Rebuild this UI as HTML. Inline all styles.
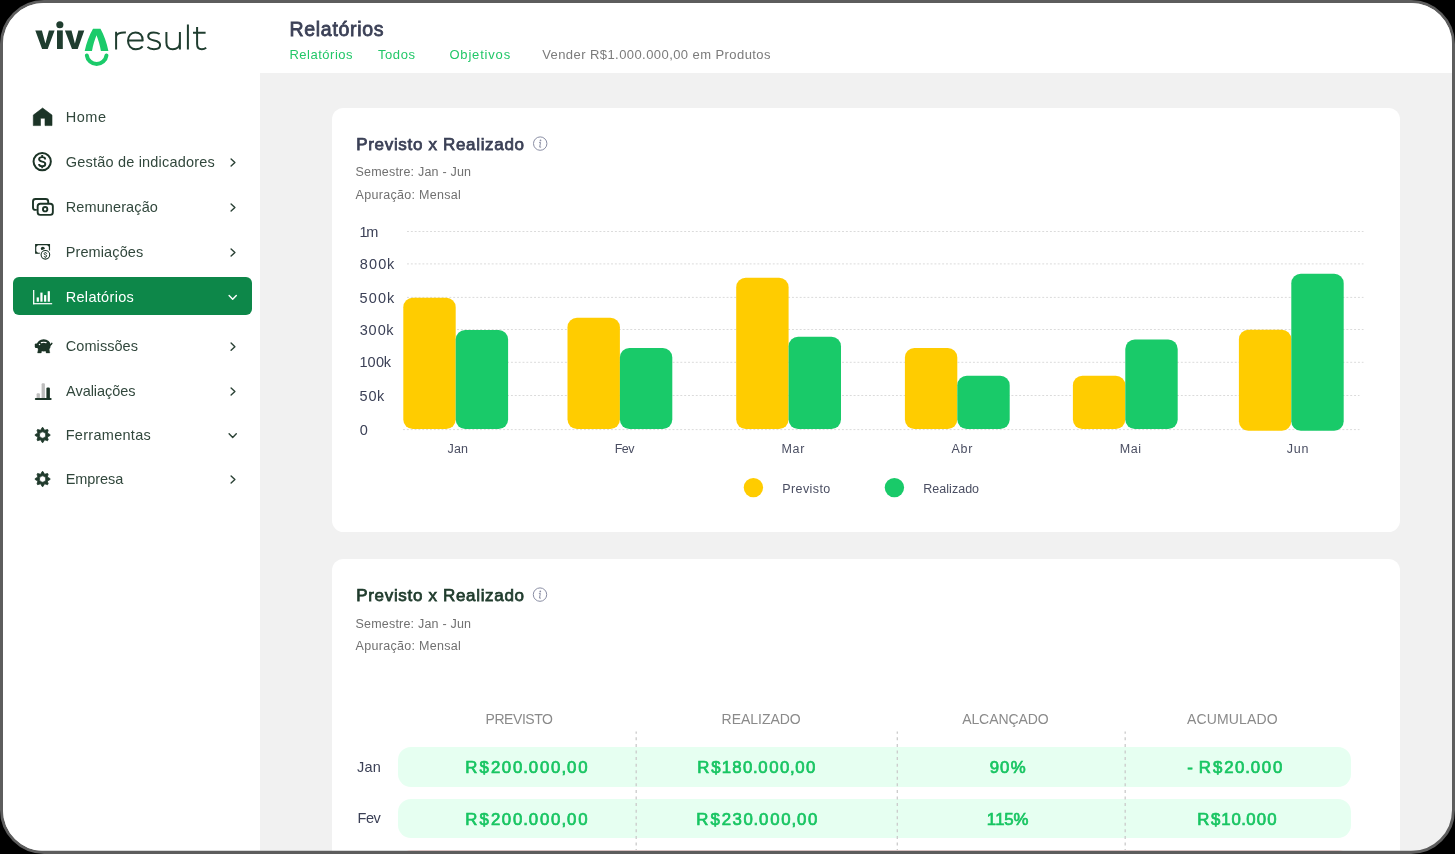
<!DOCTYPE html>
<html lang="pt-br">
<head>
<meta charset="utf-8">
<title>Relatórios</title>
<style>
html,body{margin:0;padding:0;width:1455px;height:854px;background:#000;overflow:hidden}
body{font-family:"Liberation Sans",sans-serif;position:relative}
#frame{position:absolute;left:0;top:0;width:1455px;height:854px;box-sizing:border-box;border:3px solid #5d5d5d;border-radius:44px;overflow:hidden;background:#f1f1f1}
#page{position:absolute;left:-3px;top:-3px;width:1455px;height:854px}
.abs{position:absolute}
#sidebar{left:0;top:0;width:260px;height:854px;background:#fff}
#header{left:260px;top:0;width:1195px;height:73px;background:#fff}
.card{left:332px;width:1068px;background:#fff;border-radius:11.5px}
#card1{top:108px;height:424px}
#card2{top:559px;height:340px}
#active{left:13px;top:277px;width:239px;height:38px;border-radius:6px;background:#0d8749}
.pill{left:398.4px;width:952.6px;height:39.4px;border-radius:13px;background:#e6fff1}
.t{position:absolute;white-space:nowrap;font-family:"Liberation Sans",sans-serif}
#txt{position:absolute;left:0;top:0;width:1455px;height:854px;will-change:transform}
svg{position:absolute;left:0;top:0;overflow:visible}
</style>
</head>
<body>
<div id="frame"><div id="page">
<div id="sidebar" class="abs"></div>
<div id="header" class="abs"></div>
<div id="card1" class="abs card"></div>
<div id="card2" class="abs card"></div>
<div id="active" class="abs"></div>
<div class="abs pill" style="top:747.1px;height:39.7px"></div>
<div class="abs pill" style="top:798.7px;height:38.9px"></div>

<svg width="1455" height="854" viewBox="0 0 1455 854">
<path d="M35.3 30.4 H41.9 L45.4 43.6 L48.9 30.4 H54.6 L47.7 49 H42.1 Z" fill="#1f3d2f"/>
<rect x="57" y="30.4" width="5.8" height="18.6" fill="#1f3d2f"/>
<circle cx="59.85" cy="24.7" r="3.55" fill="#1f3d2f"/>
<path d="M64.9 30.4 H71.5 L74.9 43.6 L78.4 30.4 H84.3 L77.7 49 H72 Z" fill="#1f3d2f"/>
<path d="M93 28.8 H100.5 C104 35 106.8 43 108.4 50.9 H100.9 C99.9 45.5 98.4 40 96.5 35.3 C94.6 40 93 45.5 92 50.9 H84.7 C86.4 43 89.3 35 93 28.8 Z" fill="#1bcb6a"/>
<path d="M86.84 55.4 A9.9 9.9 0 0 0 106.46 55.4" fill="none" stroke="#1bcb6a" stroke-width="4" stroke-linecap="round"/>
<path d="M116.1 49.6 V31.8 M116.1 36.8 C116.3 33.8 120 32.2 125.9 32.6 M128 40.4 H142.7 C142.7 35.4 139.8 32.4 135.4 32.4 C130.9 32.4 128 36 128 40.8 C128 45.6 131 49.2 135.8 49.2 C138.6 49.2 140.9 48.2 142.6 46.3 M159.6 34 C157.6 32.8 155.6 32.4 153.6 32.4 C150.5 32.4 148.2 33.8 148.2 36.3 C148.2 39 150.6 39.8 154.1 40.5 C157.6 41.2 160.1 42.1 160.1 45 C160.1 47.8 157.5 49.2 154 49.2 C151.5 49.2 149 48.4 147.5 46.9 M166.4 31.9 V42.4 C166.4 46.8 168.8 49.2 172.8 49.2 C176.6 49.2 179.9 46.8 179.9 42 M179.9 31.9 V49.4 M187.9 24.4 V49.6 M197.1 26.9 V44 C197.1 47.5 199 49.2 201.8 49.2 C203.5 49.2 205 48.7 206.2 47.8 M193 32.7 H205.6" fill="none" stroke="#1f3d2f" stroke-width="2" stroke-linecap="butt" stroke-linejoin="round"/>
<path d="M42.6 108 L52 115.1 V125.6 H45 V118.7 Q45 118.2 44.5 118.2 H41 Q40.5 118.2 40.5 118.7 V125.6 H33.3 V115.1 Z" fill="#1c3427" stroke="#1c3427" stroke-width="0.6" stroke-linejoin="round"/>
<circle cx="42.2" cy="161.6" r="8.65" fill="none" stroke="#1c3427" stroke-width="2"/>
<path d="M45.2 159.4 C45.2 157.9 44 157.1 42.2 157.1 C40.3 157.1 39.1 158 39.1 159.3 C39.1 160.7 40.3 161.2 42.2 161.6 C44.1 162 45.3 162.5 45.3 163.9 C45.3 165.3 44 166.2 42.2 166.2 C40.3 166.2 39.1 165.3 39.1 163.9 M42.2 155.1 V157.1 M42.2 166.2 V168.3" fill="none" stroke="#1c3427" stroke-width="1.9" stroke-linecap="butt"/>
<path d="M48.2 203 V201.5 Q48.2 199 45.7 199 H35.5 Q33 199 33 201.5 V207.4 Q33 209.9 35.5 209.9 H36.8" fill="none" stroke="#1c3427" stroke-width="1.9"/>
<rect x="37.65" y="203.75" width="15.2" height="11.1" rx="2.6" fill="none" stroke="#1c3427" stroke-width="1.9"/>
<circle cx="45.15" cy="209.15" r="2.2" fill="none" stroke="#1c3427" stroke-width="1.9"/>
<path d="M40.4 253.25 H35.7 V244.7 H49.45 V250.8" fill="none" stroke="#1c3427" stroke-width="1.2"/>
<path d="M35.7 244.7 H38.3 L35.7 247.3 Z M49.45 244.7 H46.85 L49.45 247.3 Z M35.7 253.25 V250.65 L38.3 253.25 Z" fill="#1c3427"/>
<circle cx="42.8" cy="248.6" r="1.95" fill="#1c3427"/>
<circle cx="45.4" cy="254.85" r="5.9" fill="#fff"/>
<circle cx="45.4" cy="254.85" r="4.3" fill="#fff" stroke="#1c3427" stroke-width="1.1"/>
<path d="M46.75 253.8 C46.75 253 46.2 252.7 45.4 252.7 C44.6 252.7 44.05 253.1 44.05 253.75 C44.05 254.45 44.6 254.65 45.4 254.85 C46.2 255.05 46.75 255.25 46.75 255.95 C46.75 256.65 46.2 257 45.4 257 C44.6 257 44.05 256.6 44.05 255.95 M45.4 252 V252.7 M45.4 257 V257.7" fill="none" stroke="#1c3427" stroke-width="0.9"/>
<rect x="33.05" y="290" width="1.25" height="14.3" fill="#fff"/><rect x="33.05" y="303.1" width="19.1" height="1.2" fill="#fff"/>
<rect x="36.7" y="297.4" width="2.2" height="4.30" fill="#fff"/>
<rect x="40.35" y="292.6" width="2.2" height="9.10" fill="#fff"/>
<rect x="44.05" y="295.1" width="2.2" height="6.60" fill="#fff"/>
<rect x="47.7" y="291.2" width="2.2" height="10.50" fill="#fff"/>
<ellipse cx="43.7" cy="345.4" rx="7" ry="6.2" fill="#1c3427"/>
<rect x="34.8" y="343.4" width="5" height="4.6" rx="1.2" fill="#1c3427"/>
<path d="M38.4 348.5 H42.2 L41.2 352.9 H37.6 Z M45.2 348.5 H49 L49.8 352.9 H46.2 Z" fill="#1c3427" stroke="#1c3427" stroke-width="0.4" stroke-linejoin="round"/>
<path d="M50 345 C51 344.8 51.6 344.2 51.9 343.3" fill="none" stroke="#1c3427" stroke-width="1.4" stroke-linecap="round"/>
<path d="M41.3 342.6 Q43.7 341.9 46.1 342.6" fill="none" stroke="#fff" stroke-width="1.1" stroke-linecap="round"/>
<circle cx="39.5" cy="344.5" r="0.75" fill="#fff"/>
<rect x="36.6" y="393.2" width="3.3" height="6" rx="1" fill="#bdbdbd"/>
<rect x="41.6" y="383.2" width="3.3" height="16" rx="1" fill="#bdbdbd"/>
<rect x="46.4" y="387.4" width="3.5" height="12" rx="1.2" fill="#1c3427"/>
<rect x="34.8" y="397.9" width="16.9" height="2.2" rx="1.1" fill="#1c3427"/>
<path d="M42.19 427.56 L43.01 427.56 L44.57 430.29 L47.60 429.46 L48.19 430.05 L47.36 433.08 L50.09 434.64 L50.09 435.46 L47.36 437.02 L48.19 440.05 L47.60 440.64 L44.57 439.81 L43.01 442.54 L42.19 442.54 L40.63 439.81 L37.60 440.64 L37.01 440.05 L37.84 437.02 L35.11 435.46 L35.11 434.64 L37.84 433.08 L37.01 430.05 L37.60 429.46 L40.63 430.29 Z M39.40 435.05 a3.2 3.2 0 1 0 6.4 0 a3.2 3.2 0 1 0 -6.4 0 Z" fill="#203a2c" stroke="#203a2c" stroke-width="0.8" stroke-linejoin="round" fill-rule="evenodd"/>
<path d="M42.19 471.56 L43.01 471.56 L44.57 474.29 L47.60 473.46 L48.19 474.05 L47.36 477.08 L50.09 478.64 L50.09 479.46 L47.36 481.02 L48.19 484.05 L47.60 484.64 L44.57 483.81 L43.01 486.54 L42.19 486.54 L40.63 483.81 L37.60 484.64 L37.01 484.05 L37.84 481.02 L35.11 479.46 L35.11 478.64 L37.84 477.08 L37.01 474.05 L37.60 473.46 L40.63 474.29 Z M39.40 479.05 a3.2 3.2 0 1 0 6.4 0 a3.2 3.2 0 1 0 -6.4 0 Z" fill="#203a2c" stroke="#203a2c" stroke-width="0.8" stroke-linejoin="round" fill-rule="evenodd"/>
<path d="M231.1 158.90 L234.9 162.50 L231.1 166.10" fill="none" stroke="#2b4236" stroke-width="1.4" stroke-linecap="round" stroke-linejoin="round"/>
<path d="M231.1 203.90 L234.9 207.50 L231.1 211.10" fill="none" stroke="#2b4236" stroke-width="1.4" stroke-linecap="round" stroke-linejoin="round"/>
<path d="M231.1 248.90 L234.9 252.50 L231.1 256.10" fill="none" stroke="#2b4236" stroke-width="1.4" stroke-linecap="round" stroke-linejoin="round"/>
<path d="M231.1 343.10 L234.9 346.70 L231.1 350.30" fill="none" stroke="#2b4236" stroke-width="1.4" stroke-linecap="round" stroke-linejoin="round"/>
<path d="M231.1 387.90 L234.9 391.50 L231.1 395.10" fill="none" stroke="#2b4236" stroke-width="1.4" stroke-linecap="round" stroke-linejoin="round"/>
<path d="M231.1 475.90 L234.9 479.50 L231.1 483.10" fill="none" stroke="#2b4236" stroke-width="1.4" stroke-linecap="round" stroke-linejoin="round"/>
<path d="M229.1 295.40 L232.7 299.20 L236.3 295.40" fill="none" stroke="#fff" stroke-width="1.4" stroke-linecap="round" stroke-linejoin="round"/>
<path d="M229.1 433.70 L232.7 437.50 L236.3 433.70" fill="none" stroke="#2b4236" stroke-width="1.4" stroke-linecap="round" stroke-linejoin="round"/>
<line x1="407" y1="231.5" x2="1363.5" y2="231.5" stroke="#dbdbdb" stroke-width="1" stroke-dasharray="1.95 1.9"/>
<line x1="407" y1="263.9" x2="1363.5" y2="263.9" stroke="#dbdbdb" stroke-width="1" stroke-dasharray="1.95 1.9"/>
<line x1="407" y1="297.4" x2="1363.5" y2="297.4" stroke="#dbdbdb" stroke-width="1" stroke-dasharray="1.95 1.9"/>
<line x1="407" y1="329.5" x2="1363.5" y2="329.5" stroke="#dbdbdb" stroke-width="1" stroke-dasharray="1.95 1.9"/>
<line x1="407" y1="362.3" x2="1363.5" y2="362.3" stroke="#dbdbdb" stroke-width="1" stroke-dasharray="1.95 1.9"/>
<line x1="407" y1="395.5" x2="1359.5" y2="395.5" stroke="#dbdbdb" stroke-width="1" stroke-dasharray="1.95 1.9"/>
<line x1="403" y1="429.6" x2="1359.5" y2="429.6" stroke="#dbdbdb" stroke-width="1" stroke-dasharray="1.95 1.9"/>
<rect x="403.3" y="297.8" width="52.4" height="131.20" rx="9.5" fill="#ffcc00"/>
<rect x="455.70" y="330" width="52.4" height="99.00" rx="9.5" fill="#19ca69"/>
<rect x="567.5" y="317.8" width="52.4" height="111.20" rx="9.5" fill="#ffcc00"/>
<rect x="619.90" y="348" width="52.4" height="81.00" rx="9.5" fill="#19ca69"/>
<rect x="736.2" y="277.8" width="52.4" height="151.20" rx="9.5" fill="#ffcc00"/>
<rect x="788.60" y="336.8" width="52.4" height="92.20" rx="9.5" fill="#19ca69"/>
<rect x="904.9" y="348" width="52.4" height="81.00" rx="9.5" fill="#ffcc00"/>
<rect x="957.30" y="375.8" width="52.4" height="53.20" rx="9.5" fill="#19ca69"/>
<rect x="1072.9" y="375.8" width="52.4" height="53.20" rx="9.5" fill="#ffcc00"/>
<rect x="1125.30" y="339.4" width="52.4" height="89.60" rx="9.5" fill="#19ca69"/>
<rect x="1238.9" y="329.8" width="52.4" height="101.00" rx="9.5" fill="#ffcc00"/>
<rect x="1291.30" y="273.8" width="52.4" height="157.00" rx="9.5" fill="#19ca69"/>
<circle cx="753.4" cy="487.6" r="9.7" fill="#ffcc00"/><circle cx="894.4" cy="487.6" r="9.7" fill="#19ca69"/>
<circle cx="540.2" cy="143.6" r="6.7" fill="none" stroke="#8a8ea4" stroke-width="1"/><circle cx="540.5" cy="140.4" r="0.85" fill="#8a8ea4"/><path d="M539.10 142.40 H540.50 L539.70 147.10 H541.10" fill="none" stroke="#8a8ea4" stroke-width="1"/>
<circle cx="540.0" cy="594.6" r="6.7" fill="none" stroke="#8a8ea4" stroke-width="1"/><circle cx="540.3" cy="591.4" r="0.85" fill="#8a8ea4"/><path d="M538.90 593.40 H540.30 L539.50 598.10 H540.90" fill="none" stroke="#8a8ea4" stroke-width="1"/>
<line x1="636.2" y1="731.5" x2="636.2" y2="854" stroke="#cbcbcb" stroke-width="1.3" stroke-dasharray="3 3.57" stroke-dashoffset="0.7"/>
<line x1="897.3" y1="731.5" x2="897.3" y2="854" stroke="#cbcbcb" stroke-width="1.3" stroke-dasharray="3 3.57" stroke-dashoffset="0.7"/>
<line x1="1125.2" y1="731.5" x2="1125.2" y2="854" stroke="#cbcbcb" stroke-width="1.3" stroke-dasharray="3 3.57" stroke-dashoffset="0.7"/>
<rect x="398.4" y="850.1" width="952.6" height="39" rx="13" fill="#ffe4e4"/>
<rect x="0" y="850.75" width="1455" height="3.25" fill="#5d5d5d"/>
</svg>

<div id="txt">
<span class="t" style="left:65.73px;top:110px;font-size:14.5px;line-height:14.5px;color:#31473c;letter-spacing:0.537px;">Home</span>
<span class="t" style="left:65.80px;top:155px;font-size:14.5px;line-height:14.5px;color:#31473c;letter-spacing:0.195px;">Gestão de indicadores</span>
<span class="t" style="left:65.73px;top:200px;font-size:14.5px;line-height:14.5px;color:#31473c;letter-spacing:0.109px;">Remuneração</span>
<span class="t" style="left:65.73px;top:245px;font-size:14.5px;line-height:14.5px;color:#31473c;letter-spacing:0.104px;">Premiações</span>
<span class="t" style="left:65.73px;top:290px;font-size:14.5px;line-height:14.5px;color:#ffffff;letter-spacing:0.310px;">Relatórios</span>
<span class="t" style="left:65.80px;top:339px;font-size:14.5px;line-height:14.5px;color:#31473c;letter-spacing:0.061px;">Comissões</span>
<span class="t" style="left:66.10px;top:384px;font-size:14.5px;line-height:14.5px;color:#31473c;letter-spacing:-0.042px;">Avaliações</span>
<span class="t" style="left:65.73px;top:428px;font-size:14.5px;line-height:14.5px;color:#31473c;letter-spacing:0.287px;">Ferramentas</span>
<span class="t" style="left:65.73px;top:472px;font-size:14.5px;line-height:14.5px;color:#31473c;letter-spacing:-0.087px;">Empresa</span>
<span class="t" style="left:289.51px;top:20px;font-size:19.5px;line-height:19.5px;color:#3b4056;-webkit-text-stroke:0.8px #3b4056;letter-spacing:0.697px;">Relatórios</span>
<span class="t" style="left:289.40px;top:48px;font-size:13px;line-height:13px;color:#22c768;letter-spacing:0.513px;">Relatórios</span>
<span class="t" style="left:378.00px;top:48px;font-size:13px;line-height:13px;color:#22c768;letter-spacing:0.562px;">Todos</span>
<span class="t" style="left:449.45px;top:48px;font-size:13px;line-height:13px;color:#22c768;letter-spacing:0.818px;">Objetivos</span>
<span class="t" style="left:542.15px;top:48px;font-size:13px;line-height:13px;color:#7b7b7b;letter-spacing:0.429px;">Vender R$1.000.000,00 em Produtos</span>
<span class="t" style="left:356.27px;top:136px;font-size:17px;line-height:17px;color:#3b4056;-webkit-text-stroke:0.75px #3b4056;letter-spacing:0.672px;">Previsto x Realizado</span>
<span class="t" style="left:355.49px;top:166px;font-size:12.5px;line-height:12.5px;color:#707070;letter-spacing:0.204px;">Semestre: Jan - Jun</span>
<span class="t" style="left:355.56px;top:189px;font-size:12.5px;line-height:12.5px;color:#707070;letter-spacing:0.296px;">Apuração: Mensal</span>
<span class="t" style="left:359.40px;top:225px;font-size:14.5px;line-height:14.5px;color:#3b4056;"><span style="letter-spacing:-1.27px">1</span><span style="letter-spacing:0.00px">m</span></span>
<span class="t" style="left:359.70px;top:257px;font-size:14.5px;line-height:14.5px;color:#3b4056;"><span style="letter-spacing:1.11px">8</span><span style="letter-spacing:1.18px">0</span><span style="letter-spacing:0.77px">0</span><span style="letter-spacing:0.00px">k</span></span>
<span class="t" style="left:359.58px;top:291px;font-size:14.5px;line-height:14.5px;color:#3b4056;"><span style="letter-spacing:1.15px">5</span><span style="letter-spacing:1.20px">0</span><span style="letter-spacing:0.79px">0</span><span style="letter-spacing:0.00px">k</span></span>
<span class="t" style="left:359.67px;top:323px;font-size:14.5px;line-height:14.5px;color:#3b4056;"><span style="letter-spacing:0.88px">3</span><span style="letter-spacing:0.95px">0</span><span style="letter-spacing:0.54px">0</span><span style="letter-spacing:0.00px">k</span></span>
<span class="t" style="left:359.40px;top:355px;font-size:14.5px;line-height:14.5px;color:#3b4056;"><span style="letter-spacing:0.12px">1</span><span style="letter-spacing:0.26px">0</span><span style="letter-spacing:-0.15px">0</span><span style="letter-spacing:0.00px">k</span></span>
<span class="t" style="left:359.58px;top:389px;font-size:14.5px;line-height:14.5px;color:#3b4056;"><span style="letter-spacing:0.79px">5</span><span style="letter-spacing:0.42px">0</span><span style="letter-spacing:0.00px">k</span></span>
<span class="t" style="left:359.78px;top:423px;font-size:14.5px;line-height:14.5px;color:#3b4056;"><span style="letter-spacing:0.00px">0</span></span>
<span class="t" style="left:447.56px;top:443px;font-size:12.5px;line-height:12.5px;color:#4a4e62;letter-spacing:0.151px;">Jan</span>
<span class="t" style="left:614.66px;top:443px;font-size:12.5px;line-height:12.5px;color:#4a4e62;letter-spacing:-0.453px;">Fev</span>
<span class="t" style="left:781.55px;top:443px;font-size:12.5px;line-height:12.5px;color:#4a4e62;letter-spacing:0.658px;">Mar</span>
<span class="t" style="left:951.47px;top:443px;font-size:12.5px;line-height:12.5px;color:#4a4e62;letter-spacing:0.734px;">Abr</span>
<span class="t" style="left:1119.66px;top:443px;font-size:12.5px;line-height:12.5px;color:#4a4e62;letter-spacing:0.587px;">Mai</span>
<span class="t" style="left:1286.81px;top:443px;font-size:12.5px;line-height:12.5px;color:#4a4e62;letter-spacing:0.747px;">Jun</span>
<span class="t" style="left:782.28px;top:483px;font-size:12.5px;line-height:12.5px;color:#4a4e62;letter-spacing:0.406px;">Previsto</span>
<span class="t" style="left:923.28px;top:483px;font-size:12.5px;line-height:12.5px;color:#4a4e62;letter-spacing:0.025px;">Realizado</span>
<span class="t" style="left:356.27px;top:587px;font-size:17px;line-height:17px;color:#1f3b2c;-webkit-text-stroke:0.75px #1f3b2c;letter-spacing:0.672px;">Previsto x Realizado</span>
<span class="t" style="left:355.49px;top:618px;font-size:12.5px;line-height:12.5px;color:#707070;letter-spacing:0.204px;">Semestre: Jan - Jun</span>
<span class="t" style="left:355.56px;top:640px;font-size:12.5px;line-height:12.5px;color:#707070;letter-spacing:0.296px;">Apuração: Mensal</span>
<span class="t" style="left:485.54px;top:712px;font-size:14px;line-height:14px;color:#8a8a8a;letter-spacing:-0.437px;">PREVISTO</span>
<span class="t" style="left:721.58px;top:712px;font-size:14px;line-height:14px;color:#8a8a8a;letter-spacing:-0.033px;">REALIZADO</span>
<span class="t" style="left:962.13px;top:712px;font-size:14px;line-height:14px;color:#8a8a8a;letter-spacing:-0.075px;">ALCANÇADO</span>
<span class="t" style="left:1187.00px;top:712px;font-size:14px;line-height:14px;color:#8a8a8a;letter-spacing:0.150px;">ACUMULADO</span>
<span class="t" style="left:357.06px;top:760px;font-size:14.5px;line-height:14.5px;color:#3b4056;letter-spacing:0.211px;">Jan</span>
<span class="t" style="left:357.51px;top:811px;font-size:14.5px;line-height:14.5px;color:#3b4056;letter-spacing:-0.411px;">Fev</span>
<span class="t" style="left:465.25px;top:760px;font-size:16.8px;line-height:16.8px;color:#18c562;-webkit-text-stroke:0.7px #18c562;"><span style="letter-spacing:2.15px">R</span><span style="letter-spacing:2.00px">$</span><span style="letter-spacing:1.60px">2</span><span style="letter-spacing:1.80px">0</span><span style="letter-spacing:0.93px">0</span><span style="letter-spacing:0.92px">.</span><span style="letter-spacing:1.80px">0</span><span style="letter-spacing:1.80px">0</span><span style="letter-spacing:0.96px">0</span><span style="letter-spacing:0.93px">,</span><span style="letter-spacing:1.80px">0</span><span style="letter-spacing:0.00px">0</span></span>
<span class="t" style="left:697.20px;top:760px;font-size:16.8px;line-height:16.8px;color:#18c562;-webkit-text-stroke:0.7px #18c562;"><span style="letter-spacing:1.84px">R</span><span style="letter-spacing:1.26px">$</span><span style="letter-spacing:1.26px">1</span><span style="letter-spacing:1.41px">8</span><span style="letter-spacing:0.62px">0</span><span style="letter-spacing:0.61px">.</span><span style="letter-spacing:1.49px">0</span><span style="letter-spacing:1.49px">0</span><span style="letter-spacing:0.65px">0</span><span style="letter-spacing:0.62px">,</span><span style="letter-spacing:1.49px">0</span><span style="letter-spacing:0.00px">0</span></span>
<span class="t" style="left:989.66px;top:760px;font-size:16.8px;line-height:16.8px;color:#18c562;-webkit-text-stroke:0.7px #18c562;"><span style="letter-spacing:1.10px">9</span><span style="letter-spacing:1.32px">0</span><span style="letter-spacing:0.00px">%</span></span>
<span class="t" style="left:1187.19px;top:760px;font-size:16.8px;line-height:16.8px;color:#18c562;-webkit-text-stroke:0.7px #18c562;"><span style="letter-spacing:0.99px">-</span><span style="letter-spacing:0.35px">&nbsp;</span><span style="letter-spacing:2.07px">R</span><span style="letter-spacing:1.92px">$</span><span style="letter-spacing:1.51px">2</span><span style="letter-spacing:0.84px">0</span><span style="letter-spacing:0.83px">.</span><span style="letter-spacing:1.72px">0</span><span style="letter-spacing:1.72px">0</span><span style="letter-spacing:0.00px">0</span></span>
<span class="t" style="left:465.25px;top:812px;font-size:16.8px;line-height:16.8px;color:#18c562;-webkit-text-stroke:0.7px #18c562;"><span style="letter-spacing:2.15px">R</span><span style="letter-spacing:2.00px">$</span><span style="letter-spacing:1.60px">2</span><span style="letter-spacing:1.80px">0</span><span style="letter-spacing:0.93px">0</span><span style="letter-spacing:0.92px">.</span><span style="letter-spacing:1.80px">0</span><span style="letter-spacing:1.80px">0</span><span style="letter-spacing:0.96px">0</span><span style="letter-spacing:0.93px">,</span><span style="letter-spacing:1.80px">0</span><span style="letter-spacing:0.00px">0</span></span>
<span class="t" style="left:696.20px;top:812px;font-size:16.8px;line-height:16.8px;color:#18c562;-webkit-text-stroke:0.7px #18c562;"><span style="letter-spacing:2.06px">R</span><span style="letter-spacing:1.91px">$</span><span style="letter-spacing:1.52px">2</span><span style="letter-spacing:1.62px">3</span><span style="letter-spacing:0.83px">0</span><span style="letter-spacing:0.82px">.</span><span style="letter-spacing:1.70px">0</span><span style="letter-spacing:1.70px">0</span><span style="letter-spacing:0.86px">0</span><span style="letter-spacing:0.84px">,</span><span style="letter-spacing:1.70px">0</span><span style="letter-spacing:0.00px">0</span></span>
<span class="t" style="left:986.71px;top:812px;font-size:16.8px;line-height:16.8px;color:#18c562;-webkit-text-stroke:0.7px #18c562;"><span style="letter-spacing:-0.92px">1</span><span style="letter-spacing:-0.31px">1</span><span style="letter-spacing:-0.11px">5</span><span style="letter-spacing:0.00px">%</span></span>
<span class="t" style="left:1197.25px;top:812px;font-size:16.8px;line-height:16.8px;color:#18c562;-webkit-text-stroke:0.7px #18c562;"><span style="letter-spacing:1.55px">R</span><span style="letter-spacing:0.96px">$</span><span style="letter-spacing:1.03px">1</span><span style="letter-spacing:0.33px">0</span><span style="letter-spacing:0.31px">.</span><span style="letter-spacing:1.20px">0</span><span style="letter-spacing:1.20px">0</span><span style="letter-spacing:0.00px">0</span></span>
</div>
</div></div>
</body>
</html>
